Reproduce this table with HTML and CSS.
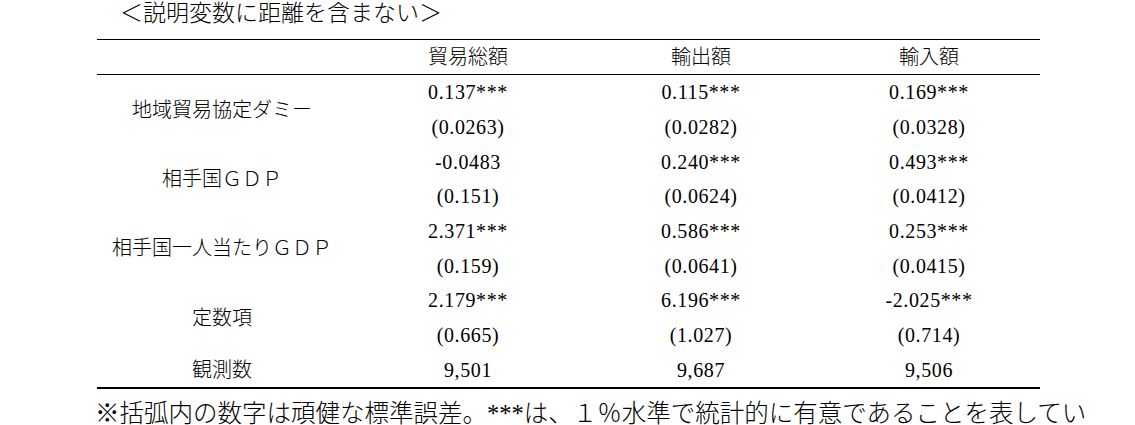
FILE: index.html
```html
<!DOCTYPE html>
<html lang="ja">
<head>
<meta charset="utf-8">
<title>説明変数に距離を含まない</title>
<link rel="stylesheet" href="styles.css">
</head>
<body>
<div class="page">
  <p class="title">＜説明変数に距離を含まない＞</p>
  <table class="results">
    <colgroup>
      <col class="c-label">
      <col class="c-1">
      <col class="c-2">
      <col class="c-3">
    </colgroup>
    <thead>
      <tr>
        <th></th>
        <th>貿易総額</th>
        <th>輸出額</th>
        <th class="last">輸入額</th>
      </tr>
    </thead>
    <tbody>
      <tr>
        <td class="label" rowspan="2">地域貿易協定ダミー</td>
        <td>0.137***</td><td>0.115***</td><td class="last">0.169***</td>
      </tr>
      <tr>
        <td>(0.0263)</td><td>(0.0282)</td><td class="last">(0.0328)</td>
      </tr>
      <tr>
        <td class="label" rowspan="2">相手国ＧＤＰ</td>
        <td>-0.0483</td><td>0.240***</td><td class="last">0.493***</td>
      </tr>
      <tr>
        <td>(0.151)</td><td>(0.0624)</td><td class="last">(0.0412)</td>
      </tr>
      <tr>
        <td class="label" rowspan="2">相手国一人当たりＧＤＰ</td>
        <td>2.371***</td><td>0.586***</td><td class="last">0.253***</td>
      </tr>
      <tr>
        <td>(0.159)</td><td>(0.0641)</td><td class="last">(0.0415)</td>
      </tr>
      <tr>
        <td class="label" rowspan="2">定数項</td>
        <td>2.179***</td><td>6.196***</td><td class="last">-2.025***</td>
      </tr>
      <tr>
        <td>(0.665)</td><td>(1.027)</td><td class="last">(0.714)</td>
      </tr>
      <tr>
        <td class="label">観測数</td>
        <td>9,501</td><td>9,687</td><td class="last">9,506</td>
      </tr>
    </tbody>
  </table>
  <p class="note">※括弧内の数字は頑健な標準誤差。***は、１％水準で統計的に有意であることを表してい</p>
</div>
</body>
</html>
```
FILE: styles.css
```css
html, body {
  margin: 0;
  padding: 0;
  background: #ffffff;
  overflow: hidden;
}

body {
  color: #000000;
  font-family: "Liberation Serif", "Noto Sans CJK JP", serif;
}

.page {
  padding-left: 97px;
  width: 943px;
}

.title {
  margin: 0;
  height: 39px;
  padding-left: 23px;
  font-size: 23px;
  line-height: 28px;
  font-weight: 300;
  white-space: nowrap;
}

.results {
  width: 943px;
  border-collapse: separate;
  border-spacing: 0;
  border-top: 1px solid #000;
  border-bottom: 2px solid #000;
  font-size: 20px;
  table-layout: fixed;
}

.c-label { width: 250px; }
.c-1 { width: 242px; }
.c-2 { width: 224px; }
.c-3 { width: 227px; }

.results th {
  height: 34px;
  padding: 0;
  font-weight: 300;
  text-align: center;
  vertical-align: middle;
  line-height: 1;
  border-bottom: 1px solid #000;
}

.results td {
  height: 34.67px;
  padding: 0;
  text-align: center;
  vertical-align: middle;
  line-height: 1;
  font-weight: 300;
  letter-spacing: 0.6px;
  white-space: nowrap;
}

.results td.label {
  letter-spacing: 0;
}

.results .last {
  padding-left: 5px;
}

.note {
  margin: 13px 0 0 -2px;
  font-size: 24.5px;
  line-height: 24px;
  font-weight: 300;
  white-space: nowrap;
}
```
